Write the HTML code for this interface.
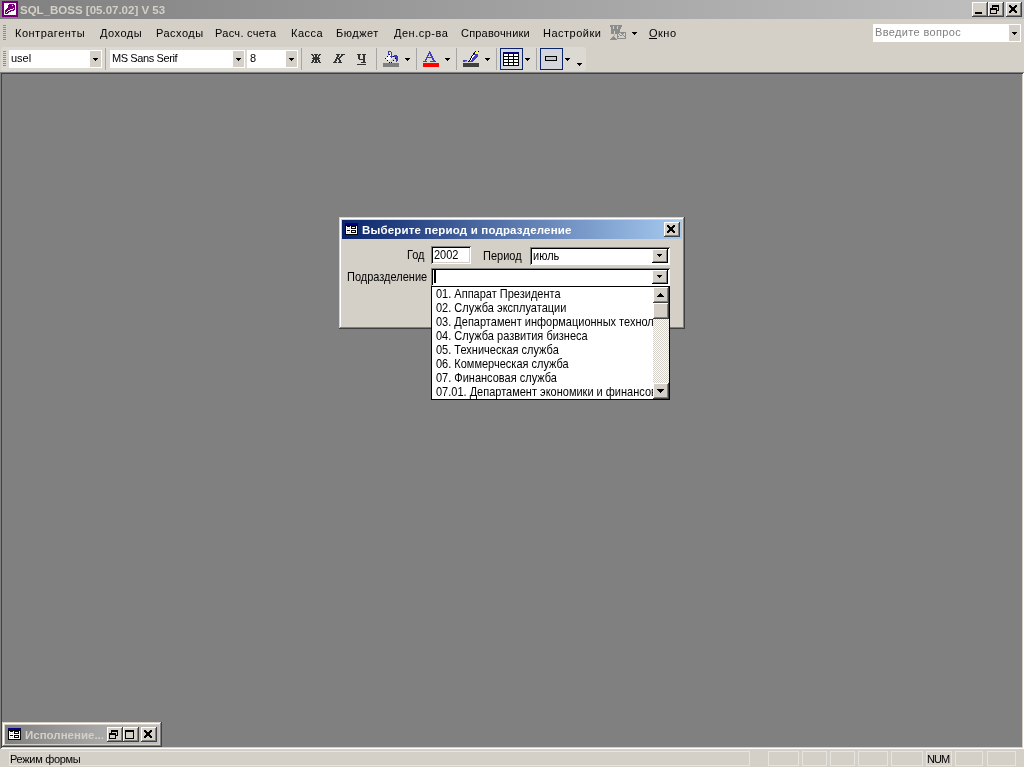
<!DOCTYPE html>
<html><head><meta charset="utf-8">
<style>
*{margin:0;padding:0;box-sizing:border-box}
html,body{width:1024px;height:768px;overflow:hidden;background:#d4d0c8;font-family:"Liberation Sans",sans-serif;font-size:11px;color:#000}
.a{position:absolute}
.t{position:absolute;white-space:nowrap;line-height:13px;font-size:11px;will-change:transform}
.m{letter-spacing:0.5px}
.d{font-size:11px;transform:scaleY(1.13);transform-origin:0 0}
.raised{background:#d4d0c8;box-shadow:inset -1px -1px #404040,inset 1px 1px #d4d0c8,inset -2px -2px #808080,inset 2px 2px #fff}
.craised{background:#d4d0c8;box-shadow:inset -1px -1px #404040,inset 1px 1px #fff,inset -2px -2px #808080}
.sunken{background:#fff;box-shadow:inset 1px 1px #808080,inset -1px -1px #fff,inset 2px 2px #000,inset -2px -2px #d4d0c8}
.csunk{background:#fff;box-shadow:inset 1px 1px #808080,inset -1px -1px #fff,inset 2px 2px #000,inset -2px -2px #fff}
.cbtn{background:#d4d0c8;box-shadow:inset -1px -1px #000,inset 1px 1px #fff,inset -2px -2px #808080}
.grip{position:absolute;width:3px;height:1px;background:#8c8c8c}
.sep{position:absolute;width:1px;background:#a6a6a6}
.pan{position:absolute;top:751px;height:15px;border:1px solid #e6e4df}
</style></head><body>

<div class="a" style="left:0px;top:0px;width:1024px;height:19px;background:linear-gradient(to right,#808080,#c0c0c0)"></div>
<svg class="a" style="left:2px;top:1px" width="16" height="16" shape-rendering="crispEdges"><rect width="16" height="16" fill="#fff"/><rect x="0" y="0" width="1" height="1" fill="#800000"/><rect x="1" y="0" width="1" height="1" fill="#800080"/><rect x="2" y="0" width="1" height="1" fill="#800000"/><rect x="3" y="0" width="1" height="1" fill="#800080"/><rect x="4" y="0" width="1" height="1" fill="#800000"/><rect x="5" y="0" width="1" height="1" fill="#800080"/><rect x="6" y="0" width="1" height="1" fill="#800000"/><rect x="7" y="0" width="1" height="1" fill="#800080"/><rect x="8" y="0" width="1" height="1" fill="#800000"/><rect x="9" y="0" width="1" height="1" fill="#800080"/><rect x="10" y="0" width="1" height="1" fill="#800000"/><rect x="11" y="0" width="1" height="1" fill="#800080"/><rect x="12" y="0" width="1" height="1" fill="#800000"/><rect x="13" y="0" width="1" height="1" fill="#800080"/><rect x="14" y="0" width="1" height="1" fill="#800000"/><rect x="15" y="0" width="1" height="1" fill="#800080"/><rect x="0" y="1" width="1" height="1" fill="#800080"/><rect x="1" y="1" width="1" height="1" fill="#800000"/><rect x="2" y="1" width="1" height="1" fill="#800080"/><rect x="3" y="1" width="1" height="1" fill="#800000"/><rect x="4" y="1" width="1" height="1" fill="#800080"/><rect x="5" y="1" width="1" height="1" fill="#800000"/><rect x="6" y="1" width="1" height="1" fill="#800080"/><rect x="7" y="1" width="1" height="1" fill="#800000"/><rect x="8" y="1" width="1" height="1" fill="#800080"/><rect x="9" y="1" width="1" height="1" fill="#800000"/><rect x="10" y="1" width="1" height="1" fill="#800080"/><rect x="11" y="1" width="1" height="1" fill="#800000"/><rect x="12" y="1" width="1" height="1" fill="#800080"/><rect x="13" y="1" width="1" height="1" fill="#800000"/><rect x="14" y="1" width="1" height="1" fill="#800080"/><rect x="15" y="1" width="1" height="1" fill="#800000"/><rect x="0" y="2" width="1" height="1" fill="#800000"/><rect x="1" y="2" width="1" height="1" fill="#800080"/><rect x="14" y="2" width="1" height="1" fill="#800000"/><rect x="15" y="2" width="1" height="1" fill="#800080"/><rect x="0" y="3" width="1" height="1" fill="#800080"/><rect x="1" y="3" width="1" height="1" fill="#800000"/><rect x="7" y="3" width="1" height="1" fill="#800000"/><rect x="8" y="3" width="1" height="1" fill="#800080"/><rect x="9" y="3" width="1" height="1" fill="#800000"/><rect x="10" y="3" width="1" height="1" fill="#800080"/><rect x="11" y="3" width="1" height="1" fill="#800000"/><rect x="14" y="3" width="1" height="1" fill="#800080"/><rect x="15" y="3" width="1" height="1" fill="#800000"/><rect x="0" y="4" width="1" height="1" fill="#800000"/><rect x="1" y="4" width="1" height="1" fill="#800080"/><rect x="6" y="4" width="1" height="1" fill="#800000"/><rect x="7" y="4" width="1" height="1" fill="#800080"/><rect x="8" y="4" width="1" height="1" fill="#800000"/><rect x="9" y="4" width="1" height="1" fill="#800080"/><rect x="10" y="4" width="1" height="1" fill="#fff"/><rect x="11" y="4" width="1" height="1" fill="#800080"/><rect x="12" y="4" width="1" height="1" fill="#800000"/><rect x="14" y="4" width="1" height="1" fill="#800000"/><rect x="15" y="4" width="1" height="1" fill="#800080"/><rect x="0" y="5" width="1" height="1" fill="#800080"/><rect x="1" y="5" width="1" height="1" fill="#800000"/><rect x="6" y="5" width="1" height="1" fill="#800080"/><rect x="7" y="5" width="1" height="1" fill="#800000"/><rect x="8" y="5" width="1" height="1" fill="#800080"/><rect x="9" y="5" width="1" height="1" fill="#800000"/><rect x="10" y="5" width="1" height="1" fill="#800080"/><rect x="11" y="5" width="1" height="1" fill="#800000"/><rect x="12" y="5" width="1" height="1" fill="#800080"/><rect x="14" y="5" width="1" height="1" fill="#800080"/><rect x="15" y="5" width="1" height="1" fill="#800000"/><rect x="0" y="6" width="1" height="1" fill="#800000"/><rect x="1" y="6" width="1" height="1" fill="#800080"/><rect x="6" y="6" width="1" height="1" fill="#800000"/><rect x="7" y="6" width="1" height="1" fill="#800080"/><rect x="8" y="6" width="1" height="1" fill="#800000"/><rect x="9" y="6" width="1" height="1" fill="#800080"/><rect x="10" y="6" width="1" height="1" fill="#800000"/><rect x="11" y="6" width="1" height="1" fill="#800080"/><rect x="12" y="6" width="1" height="1" fill="#800000"/><rect x="14" y="6" width="1" height="1" fill="#800000"/><rect x="15" y="6" width="1" height="1" fill="#800080"/><rect x="0" y="7" width="1" height="1" fill="#800080"/><rect x="1" y="7" width="1" height="1" fill="#800000"/><rect x="5" y="7" width="1" height="1" fill="#800000"/><rect x="6" y="7" width="1" height="1" fill="#800080"/><rect x="7" y="7" width="1" height="1" fill="#800000"/><rect x="8" y="7" width="1" height="1" fill="#800080"/><rect x="9" y="7" width="1" height="1" fill="#800000"/><rect x="10" y="7" width="1" height="1" fill="#800080"/><rect x="11" y="7" width="1" height="1" fill="#fff"/><rect x="12" y="7" width="1" height="1" fill="#800080"/><rect x="14" y="7" width="1" height="1" fill="#800080"/><rect x="15" y="7" width="1" height="1" fill="#800000"/><rect x="0" y="8" width="1" height="1" fill="#800000"/><rect x="1" y="8" width="1" height="1" fill="#800080"/><rect x="4" y="8" width="1" height="1" fill="#800000"/><rect x="5" y="8" width="1" height="1" fill="#800080"/><rect x="6" y="8" width="1" height="1" fill="#800000"/><rect x="7" y="8" width="1" height="1" fill="#800080"/><rect x="8" y="8" width="3" height="1" fill="#fff"/><rect x="11" y="8" width="1" height="1" fill="#800080"/><rect x="12" y="8" width="1" height="1" fill="#800000"/><rect x="14" y="8" width="1" height="1" fill="#800000"/><rect x="15" y="8" width="1" height="1" fill="#800080"/><rect x="0" y="9" width="1" height="1" fill="#800080"/><rect x="1" y="9" width="1" height="1" fill="#800000"/><rect x="3" y="9" width="1" height="1" fill="#800000"/><rect x="4" y="9" width="1" height="1" fill="#800080"/><rect x="5" y="9" width="1" height="1" fill="#800000"/><rect x="6" y="9" width="2" height="1" fill="#fff"/><rect x="8" y="9" width="1" height="1" fill="#800080"/><rect x="9" y="9" width="1" height="1" fill="#800000"/><rect x="10" y="9" width="1" height="1" fill="#800080"/><rect x="11" y="9" width="1" height="1" fill="#800000"/><rect x="14" y="9" width="1" height="1" fill="#800080"/><rect x="15" y="9" width="1" height="1" fill="#800000"/><rect x="0" y="10" width="1" height="1" fill="#800000"/><rect x="1" y="10" width="1" height="1" fill="#800080"/><rect x="3" y="10" width="1" height="1" fill="#800080"/><rect x="4" y="10" width="1" height="1" fill="#800000"/><rect x="5" y="10" width="1" height="1" fill="#fff"/><rect x="6" y="10" width="1" height="1" fill="#800000"/><rect x="7" y="10" width="1" height="1" fill="#800080"/><rect x="8" y="10" width="1" height="1" fill="#800000"/><rect x="14" y="10" width="1" height="1" fill="#800000"/><rect x="15" y="10" width="1" height="1" fill="#800080"/><rect x="0" y="11" width="1" height="1" fill="#800080"/><rect x="1" y="11" width="1" height="1" fill="#800000"/><rect x="3" y="11" width="1" height="1" fill="#800000"/><rect x="4" y="11" width="1" height="1" fill="#fff"/><rect x="5" y="11" width="1" height="1" fill="#800000"/><rect x="6" y="11" width="1" height="1" fill="#800080"/><rect x="14" y="11" width="1" height="1" fill="#800080"/><rect x="15" y="11" width="1" height="1" fill="#800000"/><rect x="0" y="12" width="1" height="1" fill="#800000"/><rect x="1" y="12" width="1" height="1" fill="#800080"/><rect x="3" y="12" width="1" height="1" fill="#800080"/><rect x="4" y="12" width="1" height="1" fill="#800000"/><rect x="5" y="12" width="1" height="1" fill="#800080"/><rect x="14" y="12" width="1" height="1" fill="#800000"/><rect x="15" y="12" width="1" height="1" fill="#800080"/><rect x="0" y="13" width="1" height="1" fill="#800080"/><rect x="1" y="13" width="1" height="1" fill="#800000"/><rect x="14" y="13" width="1" height="1" fill="#800080"/><rect x="15" y="13" width="1" height="1" fill="#800000"/><rect x="0" y="14" width="1" height="1" fill="#800000"/><rect x="1" y="14" width="1" height="1" fill="#800080"/><rect x="2" y="14" width="1" height="1" fill="#800000"/><rect x="3" y="14" width="1" height="1" fill="#800080"/><rect x="4" y="14" width="1" height="1" fill="#800000"/><rect x="5" y="14" width="1" height="1" fill="#800080"/><rect x="6" y="14" width="1" height="1" fill="#800000"/><rect x="7" y="14" width="1" height="1" fill="#800080"/><rect x="8" y="14" width="1" height="1" fill="#800000"/><rect x="9" y="14" width="1" height="1" fill="#800080"/><rect x="10" y="14" width="1" height="1" fill="#800000"/><rect x="11" y="14" width="1" height="1" fill="#800080"/><rect x="12" y="14" width="1" height="1" fill="#800000"/><rect x="13" y="14" width="1" height="1" fill="#800080"/><rect x="14" y="14" width="1" height="1" fill="#800000"/><rect x="15" y="14" width="1" height="1" fill="#800080"/><rect x="0" y="15" width="1" height="1" fill="#800080"/><rect x="1" y="15" width="1" height="1" fill="#800000"/><rect x="2" y="15" width="1" height="1" fill="#800080"/><rect x="3" y="15" width="1" height="1" fill="#800000"/><rect x="4" y="15" width="1" height="1" fill="#800080"/><rect x="5" y="15" width="1" height="1" fill="#800000"/><rect x="6" y="15" width="1" height="1" fill="#800080"/><rect x="7" y="15" width="1" height="1" fill="#800000"/><rect x="8" y="15" width="1" height="1" fill="#800080"/><rect x="9" y="15" width="1" height="1" fill="#800000"/><rect x="10" y="15" width="1" height="1" fill="#800080"/><rect x="11" y="15" width="1" height="1" fill="#800000"/><rect x="12" y="15" width="1" height="1" fill="#800080"/><rect x="13" y="15" width="1" height="1" fill="#800000"/><rect x="14" y="15" width="1" height="1" fill="#800080"/><rect x="15" y="15" width="1" height="1" fill="#800000"/></svg>
<div class="t" style="left:20px;top:4px;font-weight:bold;font-size:11.5px;color:#d4d0c8">SQL_BOSS [05.07.02] V 53</div>
<div class="a craised" style="left:972px;top:2px;width:16px;height:15px"></div><div class="a" style="left:975px;top:12px;width:7px;height:2px;background:#000"></div>
<div class="a craised" style="left:988px;top:2px;width:16px;height:15px"></div><svg class="a" style="left:990px;top:5px" width="9" height="9" shape-rendering="crispEdges"><rect x="2" y="0" width="7" height="1" fill="#000"/><rect x="2" y="1" width="7" height="1" fill="#000"/><rect x="2" y="2" width="1" height="1" fill="#000"/><rect x="8" y="2" width="1" height="1" fill="#000"/><rect x="0" y="3" width="7" height="1" fill="#000"/><rect x="8" y="3" width="1" height="1" fill="#000"/><rect x="0" y="4" width="7" height="1" fill="#000"/><rect x="8" y="4" width="1" height="1" fill="#000"/><rect x="0" y="5" width="1" height="1" fill="#000"/><rect x="6" y="5" width="3" height="1" fill="#000"/><rect x="0" y="6" width="1" height="1" fill="#000"/><rect x="6" y="6" width="1" height="1" fill="#000"/><rect x="0" y="7" width="1" height="1" fill="#000"/><rect x="6" y="7" width="1" height="1" fill="#000"/><rect x="0" y="8" width="7" height="1" fill="#000"/></svg>
<div class="a craised" style="left:1006px;top:2px;width:16px;height:15px"></div><svg class="a" style="left:1009px;top:5px" width="8" height="8" shape-rendering="crispEdges"><rect x="0" y="0" width="2" height="1" fill="#000"/><rect x="6" y="0" width="2" height="1" fill="#000"/><rect x="0" y="1" width="3" height="1" fill="#000"/><rect x="5" y="1" width="3" height="1" fill="#000"/><rect x="1" y="2" width="6" height="1" fill="#000"/><rect x="2" y="3" width="4" height="1" fill="#000"/><rect x="2" y="4" width="4" height="1" fill="#000"/><rect x="1" y="5" width="6" height="1" fill="#000"/><rect x="0" y="6" width="3" height="1" fill="#000"/><rect x="5" y="6" width="3" height="1" fill="#000"/><rect x="0" y="7" width="2" height="1" fill="#000"/><rect x="6" y="7" width="2" height="1" fill="#000"/></svg>
<div class="grip" style="left:3px;top:25px"></div>
<div class="grip" style="left:3px;top:27px"></div>
<div class="grip" style="left:3px;top:29px"></div>
<div class="grip" style="left:3px;top:31px"></div>
<div class="grip" style="left:3px;top:33px"></div>
<div class="grip" style="left:3px;top:35px"></div>
<div class="grip" style="left:3px;top:37px"></div>
<div class="grip" style="left:3px;top:39px"></div>
<div class="t m" style="left:15px;top:27px;letter-spacing:0.5px">Контрагенты</div>
<div class="t m" style="left:100px;top:27px;letter-spacing:0.5px">Доходы</div>
<div class="t m" style="left:156px;top:27px;letter-spacing:0.5px">Расходы</div>
<div class="t m" style="left:215px;top:27px;letter-spacing:0.3px">Расч. счета</div>
<div class="t m" style="left:291px;top:27px;letter-spacing:0.5px">Касса</div>
<div class="t m" style="left:336px;top:27px;letter-spacing:0.5px">Бюджет</div>
<div class="t m" style="left:394px;top:27px;letter-spacing:0.5px">Ден.ср-ва</div>
<div class="t m" style="left:461px;top:27px;letter-spacing:0.2px">Справочники</div>
<div class="t m" style="left:543px;top:27px;letter-spacing:0.5px">Настройки</div>
<svg class="a" style="left:610px;top:25px" width="16" height="15" shape-rendering="crispEdges"><rect x="0" y="0" width="12" height="1" fill="#8c8c8c"/><rect x="0" y="1" width="3" height="1" fill="#8c8c8c"/><rect x="3" y="1" width="1" height="1" fill="#d4d0c8"/><rect x="4" y="1" width="3" height="1" fill="#8c8c8c"/><rect x="7" y="1" width="1" height="1" fill="#d4d0c8"/><rect x="8" y="1" width="4" height="1" fill="#8c8c8c"/><rect x="1" y="2" width="2" height="1" fill="#8c8c8c"/><rect x="3" y="2" width="1" height="1" fill="#d4d0c8"/><rect x="4" y="2" width="3" height="1" fill="#8c8c8c"/><rect x="7" y="2" width="1" height="1" fill="#d4d0c8"/><rect x="8" y="2" width="3" height="1" fill="#8c8c8c"/><rect x="1" y="3" width="2" height="1" fill="#8c8c8c"/><rect x="3" y="3" width="1" height="1" fill="#d4d0c8"/><rect x="4" y="3" width="3" height="1" fill="#8c8c8c"/><rect x="7" y="3" width="1" height="1" fill="#d4d0c8"/><rect x="8" y="3" width="3" height="1" fill="#8c8c8c"/><rect x="1" y="4" width="9" height="1" fill="#8c8c8c"/><rect x="1" y="5" width="9" height="1" fill="#8c8c8c"/><rect x="1" y="6" width="3" height="1" fill="#8c8c8c"/><rect x="4" y="6" width="1" height="1" fill="#d4d0c8"/><rect x="5" y="6" width="5" height="1" fill="#8c8c8c"/><rect x="1" y="7" width="3" height="1" fill="#8c8c8c"/><rect x="4" y="7" width="1" height="1" fill="#d4d0c8"/><rect x="5" y="7" width="11" height="1" fill="#8c8c8c"/><rect x="1" y="8" width="3" height="1" fill="#8c8c8c"/><rect x="4" y="8" width="1" height="1" fill="#d4d0c8"/><rect x="5" y="8" width="4" height="1" fill="#8c8c8c"/><rect x="9" y="8" width="2" height="1" fill="#d4d0c8"/><rect x="11" y="8" width="3" height="1" fill="#8c8c8c"/><rect x="14" y="8" width="1" height="1" fill="#d4d0c8"/><rect x="15" y="8" width="1" height="1" fill="#8c8c8c"/><rect x="4" y="9" width="1" height="1" fill="#b4b2ae"/><rect x="7" y="9" width="1" height="1" fill="#8c8c8c"/><rect x="8" y="9" width="1" height="1" fill="#d4d0c8"/><rect x="9" y="9" width="1" height="1" fill="#8c8c8c"/><rect x="10" y="9" width="2" height="1" fill="#d4d0c8"/><rect x="12" y="9" width="1" height="1" fill="#8c8c8c"/><rect x="13" y="9" width="2" height="1" fill="#d4d0c8"/><rect x="15" y="9" width="1" height="1" fill="#8c8c8c"/><rect x="4" y="10" width="1" height="1" fill="#b4b2ae"/><rect x="7" y="10" width="1" height="1" fill="#8c8c8c"/><rect x="8" y="10" width="2" height="1" fill="#d4d0c8"/><rect x="10" y="10" width="2" height="1" fill="#8c8c8c"/><rect x="12" y="10" width="1" height="1" fill="#d4d0c8"/><rect x="13" y="10" width="1" height="1" fill="#8c8c8c"/><rect x="14" y="10" width="1" height="1" fill="#d4d0c8"/><rect x="15" y="10" width="1" height="1" fill="#8c8c8c"/><rect x="3" y="11" width="1" height="1" fill="#8c8c8c"/><rect x="7" y="11" width="2" height="1" fill="#8c8c8c"/><rect x="9" y="11" width="5" height="1" fill="#d4d0c8"/><rect x="14" y="11" width="2" height="1" fill="#8c8c8c"/><rect x="2" y="12" width="3" height="1" fill="#8c8c8c"/><rect x="7" y="12" width="1" height="1" fill="#8c8c8c"/><rect x="8" y="12" width="7" height="1" fill="#d4d0c8"/><rect x="15" y="12" width="1" height="1" fill="#8c8c8c"/><rect x="1" y="13" width="5" height="1" fill="#8c8c8c"/><rect x="7" y="13" width="9" height="1" fill="#8c8c8c"/><rect x="0" y="14" width="7" height="1" fill="#8c8c8c"/></svg>
<svg class="a" style="left:632px;top:32px" width="5" height="3" shape-rendering="crispEdges"><rect x="0" y="0" width="5" height="1" fill="#000"/><rect x="1" y="1" width="3" height="1" fill="#000"/><rect x="2" y="2" width="1" height="1" fill="#000"/></svg>
<div class="t m" style="left:649px;top:27px">Окно</div>
<div class="a" style="left:649px;top:38px;width:8px;height:1px;background:#000"></div>
<div class="a" style="left:873px;top:24px;width:148px;height:18px;background:#fff"></div>
<div class="a" style="left:1009px;top:25px;width:11px;height:16px;background:#d4d0c8"></div>
<svg class="a" style="left:1012px;top:32px" width="5" height="3" shape-rendering="crispEdges"><rect x="0" y="0" width="5" height="1" fill="#000"/><rect x="1" y="1" width="3" height="1" fill="#000"/><rect x="2" y="2" width="1" height="1" fill="#000"/></svg>
<div class="t" style="left:875px;top:26px;color:#808080;letter-spacing:0.35px">Введите вопрос</div>
<div class="a" style="left:1px;top:47px;width:585px;height:24px;background:#dcd9d2;border-radius:3px"></div>
<div class="grip" style="left:3px;top:51px"></div>
<div class="grip" style="left:3px;top:53px"></div>
<div class="grip" style="left:3px;top:55px"></div>
<div class="grip" style="left:3px;top:57px"></div>
<div class="grip" style="left:3px;top:59px"></div>
<div class="grip" style="left:3px;top:61px"></div>
<div class="grip" style="left:3px;top:63px"></div>
<div class="grip" style="left:3px;top:65px"></div>
<div class="a" style="left:9px;top:50px;width:93px;height:18px;background:#fff"></div><div class="a" style="left:90px;top:51px;width:11px;height:16px;background:#d4d0c8"></div><svg class="a" style="left:93px;top:58px" width="5" height="3" shape-rendering="crispEdges"><rect x="0" y="0" width="5" height="1" fill="#000"/><rect x="1" y="1" width="3" height="1" fill="#000"/><rect x="2" y="2" width="1" height="1" fill="#000"/></svg><div class="t" style="left:11px;top:52px;font-size:11px">usel</div>
<div class="sep" style="left:105px;top:48px;height:22px"></div>
<div class="a" style="left:110px;top:50px;width:135px;height:18px;background:#fff"></div><div class="a" style="left:233px;top:51px;width:11px;height:16px;background:#d4d0c8"></div><svg class="a" style="left:236px;top:58px" width="5" height="3" shape-rendering="crispEdges"><rect x="0" y="0" width="5" height="1" fill="#000"/><rect x="1" y="1" width="3" height="1" fill="#000"/><rect x="2" y="2" width="1" height="1" fill="#000"/></svg><div class="t" style="left:112px;top:52px;font-size:11px;letter-spacing:-0.4px">MS Sans Serif</div>
<div class="a" style="left:247px;top:50px;width:51px;height:18px;background:#fff"></div><div class="a" style="left:286px;top:51px;width:11px;height:16px;background:#d4d0c8"></div><svg class="a" style="left:289px;top:58px" width="5" height="3" shape-rendering="crispEdges"><rect x="0" y="0" width="5" height="1" fill="#000"/><rect x="1" y="1" width="3" height="1" fill="#000"/><rect x="2" y="2" width="1" height="1" fill="#000"/></svg><div class="t" style="left:250px;top:52px;font-size:11px">8</div>
<div class="sep" style="left:301px;top:48px;height:22px"></div>
<svg class="a" style="left:311px;top:54px" width="10" height="9" shape-rendering="crispEdges"><rect x="0" y="0" width="2" height="1" fill="#333"/><rect x="3" y="0" width="4" height="1" fill="#333"/><rect x="8" y="0" width="2" height="1" fill="#333"/><rect x="1" y="1" width="2" height="1" fill="#333"/><rect x="4" y="1" width="2" height="1" fill="#333"/><rect x="7" y="1" width="2" height="1" fill="#333"/><rect x="2" y="2" width="1" height="1" fill="#333"/><rect x="4" y="2" width="2" height="1" fill="#333"/><rect x="7" y="2" width="1" height="1" fill="#333"/><rect x="2" y="3" width="6" height="1" fill="#333"/><rect x="1" y="4" width="8" height="1" fill="#333"/><rect x="2" y="5" width="6" height="1" fill="#333"/><rect x="1" y="6" width="2" height="1" fill="#333"/><rect x="4" y="6" width="2" height="1" fill="#333"/><rect x="7" y="6" width="2" height="1" fill="#333"/><rect x="1" y="7" width="2" height="1" fill="#333"/><rect x="4" y="7" width="2" height="1" fill="#333"/><rect x="7" y="7" width="2" height="1" fill="#333"/><rect x="0" y="8" width="2" height="1" fill="#333"/><rect x="3" y="8" width="4" height="1" fill="#333"/><rect x="8" y="8" width="2" height="1" fill="#333"/></svg>
<svg class="a" style="left:333px;top:54px" width="12" height="9" shape-rendering="crispEdges"><rect x="3" y="0" width="4" height="1" fill="#333"/><rect x="8" y="0" width="4" height="1" fill="#333"/><rect x="4" y="1" width="2" height="1" fill="#333"/><rect x="8" y="1" width="2" height="1" fill="#333"/><rect x="4" y="2" width="2" height="1" fill="#333"/><rect x="7" y="2" width="2" height="1" fill="#333"/><rect x="3" y="3" width="2" height="1" fill="#333"/><rect x="6" y="3" width="2" height="1" fill="#333"/><rect x="3" y="4" width="4" height="1" fill="#333"/><rect x="2" y="5" width="2" height="1" fill="#333"/><rect x="5" y="5" width="2" height="1" fill="#333"/><rect x="2" y="6" width="2" height="1" fill="#333"/><rect x="6" y="6" width="2" height="1" fill="#333"/><rect x="1" y="7" width="2" height="1" fill="#333"/><rect x="6" y="7" width="2" height="1" fill="#333"/><rect x="0" y="8" width="4" height="1" fill="#333"/><rect x="5" y="8" width="4" height="1" fill="#333"/></svg>
<svg class="a" style="left:357px;top:54px" width="9" height="11" shape-rendering="crispEdges"><rect x="0" y="0" width="4" height="1" fill="#333"/><rect x="5" y="0" width="4" height="1" fill="#333"/><rect x="1" y="1" width="2" height="1" fill="#333"/><rect x="6" y="1" width="2" height="1" fill="#333"/><rect x="1" y="2" width="2" height="1" fill="#333"/><rect x="6" y="2" width="2" height="1" fill="#333"/><rect x="1" y="3" width="2" height="1" fill="#333"/><rect x="6" y="3" width="2" height="1" fill="#333"/><rect x="1" y="4" width="2" height="1" fill="#333"/><rect x="6" y="4" width="2" height="1" fill="#333"/><rect x="2" y="5" width="6" height="1" fill="#333"/><rect x="6" y="6" width="2" height="1" fill="#333"/><rect x="6" y="7" width="2" height="1" fill="#333"/><rect x="4" y="8" width="5" height="1" fill="#333"/><rect x="0" y="10" width="9" height="1" fill="#333"/></svg>
<div class="sep" style="left:376px;top:48px;height:22px"></div>
<svg class="a" style="left:383px;top:50px" width="16" height="13" shape-rendering="crispEdges"><rect x="5" y="1" width="3" height="1" fill="#3c3cb4"/><rect x="5" y="2" width="1" height="1" fill="#3c3cb4"/><rect x="8" y="2" width="1" height="1" fill="#3c3cb4"/><rect x="5" y="3" width="1" height="1" fill="#3c3cb4"/><rect x="7" y="3" width="1" height="1" fill="#d8d8d8"/><rect x="8" y="3" width="1" height="1" fill="#3c3cb4"/><rect x="5" y="4" width="1" height="1" fill="#3c3cb4"/><rect x="6" y="4" width="1" height="1" fill="#000"/><rect x="7" y="4" width="1" height="1" fill="#fff"/><rect x="8" y="4" width="1" height="1" fill="#3c3cb4"/><rect x="5" y="5" width="1" height="1" fill="#d8d8d8"/><rect x="6" y="5" width="2" height="1" fill="#fff"/><rect x="8" y="5" width="1" height="1" fill="#3c3cb4"/><rect x="9" y="5" width="1" height="1" fill="#d8d8d8"/><rect x="11" y="5" width="3" height="1" fill="#3c3cb4"/><rect x="4" y="6" width="1" height="1" fill="#000"/><rect x="5" y="6" width="2" height="1" fill="#fff"/><rect x="7" y="6" width="3" height="1" fill="#3c3cb4"/><rect x="10" y="6" width="1" height="1" fill="#000"/><rect x="11" y="6" width="4" height="1" fill="#3c3cb4"/><rect x="3" y="7" width="1" height="1" fill="#d8d8d8"/><rect x="4" y="7" width="4" height="1" fill="#fff"/><rect x="8" y="7" width="1" height="1" fill="#3c3cb4"/><rect x="9" y="7" width="2" height="1" fill="#e4e4e4"/><rect x="11" y="7" width="1" height="1" fill="#d8d8d8"/><rect x="12" y="7" width="3" height="1" fill="#3c3cb4"/><rect x="2" y="8" width="1" height="1" fill="#000"/><rect x="3" y="8" width="4" height="1" fill="#fff"/><rect x="7" y="8" width="3" height="1" fill="#e4e4e4"/><rect x="10" y="8" width="2" height="1" fill="#c8c8c8"/><rect x="12" y="8" width="1" height="1" fill="#000"/><rect x="13" y="8" width="2" height="1" fill="#3c3cb4"/><rect x="3" y="9" width="1" height="1" fill="#d8d8d8"/><rect x="4" y="9" width="2" height="1" fill="#fff"/><rect x="6" y="9" width="3" height="1" fill="#e4e4e4"/><rect x="9" y="9" width="2" height="1" fill="#c8c8c8"/><rect x="11" y="9" width="1" height="1" fill="#d8d8d8"/><rect x="13" y="9" width="2" height="1" fill="#3c3cb4"/><rect x="4" y="10" width="1" height="1" fill="#000"/><rect x="5" y="10" width="3" height="1" fill="#e4e4e4"/><rect x="8" y="10" width="2" height="1" fill="#c8c8c8"/><rect x="10" y="10" width="1" height="1" fill="#000"/><rect x="13" y="10" width="2" height="1" fill="#3c3cb4"/><rect x="5" y="11" width="1" height="1" fill="#d8d8d8"/><rect x="6" y="11" width="1" height="1" fill="#e4e4e4"/><rect x="7" y="11" width="2" height="1" fill="#c8c8c8"/><rect x="9" y="11" width="1" height="1" fill="#d8d8d8"/><rect x="13" y="11" width="1" height="1" fill="#3c3cb4"/><rect x="6" y="12" width="1" height="1" fill="#000"/><rect x="7" y="12" width="1" height="1" fill="#c8c8c8"/><rect x="8" y="12" width="1" height="1" fill="#000"/></svg>
<div class="a" style="left:383px;top:63px;width:16px;height:4px;background:#808080"></div>
<svg class="a" style="left:405px;top:58px" width="5" height="3" shape-rendering="crispEdges"><rect x="0" y="0" width="5" height="1" fill="#000"/><rect x="1" y="1" width="3" height="1" fill="#000"/><rect x="2" y="2" width="1" height="1" fill="#000"/></svg>
<div class="sep" style="left:416px;top:48px;height:22px"></div>
<svg class="a" style="left:423px;top:51px" width="16" height="11" shape-rendering="crispEdges"><rect x="6" y="0" width="1" height="1" fill="#4040c0"/><rect x="6" y="1" width="2" height="1" fill="#4040c0"/><rect x="5" y="2" width="3" height="1" fill="#4040c0"/><rect x="5" y="3" width="1" height="1" fill="#4040c0"/><rect x="7" y="3" width="2" height="1" fill="#4040c0"/><rect x="4" y="4" width="2" height="1" fill="#4040c0"/><rect x="7" y="4" width="2" height="1" fill="#4040c0"/><rect x="4" y="5" width="1" height="1" fill="#4040c0"/><rect x="8" y="5" width="2" height="1" fill="#4040c0"/><rect x="3" y="6" width="7" height="1" fill="#4040c0"/><rect x="3" y="7" width="1" height="1" fill="#4040c0"/><rect x="9" y="7" width="2" height="1" fill="#4040c0"/><rect x="2" y="8" width="2" height="1" fill="#4040c0"/><rect x="9" y="8" width="2" height="1" fill="#4040c0"/><rect x="2" y="9" width="1" height="1" fill="#4040c0"/><rect x="10" y="9" width="2" height="1" fill="#4040c0"/><rect x="0" y="10" width="4" height="1" fill="#4040c0"/><rect x="7" y="10" width="6" height="1" fill="#4040c0"/></svg>
<div class="a" style="left:423px;top:63px;width:16px;height:4px;background:#f00"></div>
<svg class="a" style="left:445px;top:58px" width="5" height="3" shape-rendering="crispEdges"><rect x="0" y="0" width="5" height="1" fill="#000"/><rect x="1" y="1" width="3" height="1" fill="#000"/><rect x="2" y="2" width="1" height="1" fill="#000"/></svg>
<div class="sep" style="left:456px;top:48px;height:22px"></div>
<svg class="a" style="left:463px;top:50px" width="16" height="13" shape-rendering="crispEdges"><rect x="12" y="1" width="1" height="1" fill="#000"/><rect x="13" y="1" width="2" height="1" fill="#ffff00"/><rect x="15" y="1" width="1" height="1" fill="#000"/><rect x="11" y="2" width="1" height="1" fill="#000"/><rect x="12" y="2" width="3" height="1" fill="#ffff00"/><rect x="10" y="3" width="2" height="1" fill="#000"/><rect x="12" y="3" width="3" height="1" fill="#ffff00"/><rect x="10" y="4" width="1" height="1" fill="#000"/><rect x="11" y="4" width="4" height="1" fill="#4040c0"/><rect x="9" y="5" width="1" height="1" fill="#000"/><rect x="10" y="5" width="2" height="1" fill="#fff"/><rect x="12" y="5" width="3" height="1" fill="#4040c0"/><rect x="8" y="6" width="1" height="1" fill="#000"/><rect x="9" y="6" width="2" height="1" fill="#fff"/><rect x="11" y="6" width="4" height="1" fill="#4040c0"/><rect x="8" y="7" width="1" height="1" fill="#000"/><rect x="9" y="7" width="1" height="1" fill="#fff"/><rect x="10" y="7" width="4" height="1" fill="#4040c0"/><rect x="7" y="8" width="1" height="1" fill="#000"/><rect x="8" y="8" width="1" height="1" fill="#fff"/><rect x="9" y="8" width="4" height="1" fill="#4040c0"/><rect x="7" y="9" width="1" height="1" fill="#000"/><rect x="8" y="9" width="1" height="1" fill="#fff"/><rect x="9" y="9" width="3" height="1" fill="#4040c0"/><rect x="0" y="10" width="4" height="1" fill="#4040c0"/><rect x="6" y="10" width="1" height="1" fill="#000"/><rect x="7" y="10" width="1" height="1" fill="#fff"/><rect x="8" y="10" width="3" height="1" fill="#4040c0"/><rect x="0" y="11" width="2" height="1" fill="#4040c0"/><rect x="2" y="11" width="2" height="1" fill="#40c0c0"/><rect x="5" y="11" width="1" height="1" fill="#000"/><rect x="6" y="11" width="4" height="1" fill="#4040c0"/></svg>
<div class="a" style="left:463px;top:63px;width:16px;height:4px;background:#404040"></div>
<svg class="a" style="left:485px;top:58px" width="5" height="3" shape-rendering="crispEdges"><rect x="0" y="0" width="5" height="1" fill="#000"/><rect x="1" y="1" width="3" height="1" fill="#000"/><rect x="2" y="2" width="1" height="1" fill="#000"/></svg>
<div class="sep" style="left:496px;top:48px;height:22px"></div>
<div class="a" style="left:500px;top:48px;width:23px;height:22px;background:#d5d6db;border:1px solid #0a246a"></div>
<svg class="a" style="left:503px;top:52px" width="16" height="14" shape-rendering="crispEdges"><rect x="0" y="0" width="16" height="1" fill="#000080"/><rect x="0" y="1" width="16" height="1" fill="#000080"/><rect x="0" y="2" width="1" height="1" fill="#000"/><rect x="1" y="2" width="4" height="1" fill="#fff"/><rect x="5" y="2" width="1" height="1" fill="#000"/><rect x="6" y="2" width="4" height="1" fill="#fff"/><rect x="10" y="2" width="1" height="1" fill="#000"/><rect x="11" y="2" width="4" height="1" fill="#fff"/><rect x="15" y="2" width="1" height="1" fill="#000"/><rect x="0" y="3" width="1" height="1" fill="#000"/><rect x="1" y="3" width="4" height="1" fill="#fff"/><rect x="5" y="3" width="1" height="1" fill="#000"/><rect x="6" y="3" width="4" height="1" fill="#fff"/><rect x="10" y="3" width="1" height="1" fill="#000"/><rect x="11" y="3" width="4" height="1" fill="#fff"/><rect x="15" y="3" width="1" height="1" fill="#000"/><rect x="0" y="4" width="16" height="1" fill="#000"/><rect x="0" y="5" width="1" height="1" fill="#000"/><rect x="1" y="5" width="4" height="1" fill="#fff"/><rect x="5" y="5" width="1" height="1" fill="#000"/><rect x="6" y="5" width="4" height="1" fill="#fff"/><rect x="10" y="5" width="1" height="1" fill="#000"/><rect x="11" y="5" width="4" height="1" fill="#fff"/><rect x="15" y="5" width="1" height="1" fill="#000"/><rect x="0" y="6" width="1" height="1" fill="#000"/><rect x="1" y="6" width="4" height="1" fill="#fff"/><rect x="5" y="6" width="1" height="1" fill="#000"/><rect x="6" y="6" width="4" height="1" fill="#fff"/><rect x="10" y="6" width="1" height="1" fill="#000"/><rect x="11" y="6" width="4" height="1" fill="#fff"/><rect x="15" y="6" width="1" height="1" fill="#000"/><rect x="0" y="7" width="16" height="1" fill="#000"/><rect x="0" y="8" width="1" height="1" fill="#000"/><rect x="1" y="8" width="4" height="1" fill="#fff"/><rect x="5" y="8" width="1" height="1" fill="#000"/><rect x="6" y="8" width="4" height="1" fill="#fff"/><rect x="10" y="8" width="1" height="1" fill="#000"/><rect x="11" y="8" width="4" height="1" fill="#fff"/><rect x="15" y="8" width="1" height="1" fill="#000"/><rect x="0" y="9" width="1" height="1" fill="#000"/><rect x="1" y="9" width="4" height="1" fill="#fff"/><rect x="5" y="9" width="1" height="1" fill="#000"/><rect x="6" y="9" width="4" height="1" fill="#fff"/><rect x="10" y="9" width="1" height="1" fill="#000"/><rect x="11" y="9" width="4" height="1" fill="#fff"/><rect x="15" y="9" width="1" height="1" fill="#000"/><rect x="0" y="10" width="16" height="1" fill="#000"/><rect x="0" y="11" width="1" height="1" fill="#000"/><rect x="1" y="11" width="4" height="1" fill="#fff"/><rect x="5" y="11" width="1" height="1" fill="#000"/><rect x="6" y="11" width="4" height="1" fill="#fff"/><rect x="10" y="11" width="1" height="1" fill="#000"/><rect x="11" y="11" width="4" height="1" fill="#fff"/><rect x="15" y="11" width="1" height="1" fill="#000"/><rect x="0" y="12" width="1" height="1" fill="#000"/><rect x="1" y="12" width="4" height="1" fill="#fff"/><rect x="5" y="12" width="1" height="1" fill="#000"/><rect x="6" y="12" width="4" height="1" fill="#fff"/><rect x="10" y="12" width="1" height="1" fill="#000"/><rect x="11" y="12" width="4" height="1" fill="#fff"/><rect x="15" y="12" width="1" height="1" fill="#000"/><rect x="0" y="13" width="16" height="1" fill="#000"/></svg>
<svg class="a" style="left:525px;top:58px" width="5" height="3" shape-rendering="crispEdges"><rect x="0" y="0" width="5" height="1" fill="#000"/><rect x="1" y="1" width="3" height="1" fill="#000"/><rect x="2" y="2" width="1" height="1" fill="#000"/></svg>
<div class="sep" style="left:536px;top:48px;height:22px"></div>
<div class="a" style="left:540px;top:48px;width:23px;height:22px;background:#d5d6db;border:1px solid #0a246a"></div>
<div class="a" style="left:545px;top:56px;width:12px;height:5px;background:#c8c8c8;border:1px solid #000"></div>
<svg class="a" style="left:565px;top:58px" width="5" height="3" shape-rendering="crispEdges"><rect x="0" y="0" width="5" height="1" fill="#000"/><rect x="1" y="1" width="3" height="1" fill="#000"/><rect x="2" y="2" width="1" height="1" fill="#000"/></svg>
<svg class="a" style="left:577px;top:63px" width="5" height="3" shape-rendering="crispEdges"><rect x="0" y="0" width="5" height="1" fill="#000"/><rect x="1" y="1" width="3" height="1" fill="#000"/><rect x="2" y="2" width="1" height="1" fill="#000"/></svg>
<div class="a" style="left:0px;top:72px;width:1024px;height:677px;background:#808080;box-shadow:inset 1px 1px #808080,inset -1px -1px #fff,inset 2px 2px #404040,inset -2px -2px #d4d0c8"></div>
<div class="a raised" style="left:2px;top:722px;width:160px;height:25px;"></div>
<div class="a" style="left:5px;top:725px;width:154px;height:19px;background:linear-gradient(to right,#808080,#c0c0c0)"></div>
<svg class="a" style="left:8px;top:728px" width="13" height="12" shape-rendering="crispEdges"><rect x="0" y="0" width="13" height="1" fill="#000080"/><rect x="0" y="1" width="13" height="1" fill="#000080"/><rect x="0" y="2" width="13" height="1" fill="#000"/><rect x="0" y="3" width="1" height="1" fill="#000"/><rect x="1" y="3" width="1" height="1" fill="#fff"/><rect x="2" y="3" width="3" height="1" fill="#000"/><rect x="5" y="3" width="1" height="1" fill="#fff"/><rect x="6" y="3" width="5" height="1" fill="#000"/><rect x="11" y="3" width="1" height="1" fill="#fff"/><rect x="12" y="3" width="1" height="1" fill="#000"/><rect x="0" y="4" width="1" height="1" fill="#000"/><rect x="1" y="4" width="5" height="1" fill="#fff"/><rect x="6" y="4" width="1" height="1" fill="#000"/><rect x="7" y="4" width="3" height="1" fill="#fff"/><rect x="10" y="4" width="1" height="1" fill="#000"/><rect x="11" y="4" width="1" height="1" fill="#fff"/><rect x="12" y="4" width="1" height="1" fill="#000"/><rect x="0" y="5" width="1" height="1" fill="#000"/><rect x="1" y="5" width="1" height="1" fill="#fff"/><rect x="2" y="5" width="1" height="1" fill="#c0c0c0"/><rect x="3" y="5" width="1" height="1" fill="#fff"/><rect x="4" y="5" width="1" height="1" fill="#c0c0c0"/><rect x="5" y="5" width="1" height="1" fill="#fff"/><rect x="6" y="5" width="5" height="1" fill="#000"/><rect x="11" y="5" width="1" height="1" fill="#fff"/><rect x="12" y="5" width="1" height="1" fill="#000"/><rect x="0" y="6" width="1" height="1" fill="#000"/><rect x="1" y="6" width="11" height="1" fill="#fff"/><rect x="12" y="6" width="1" height="1" fill="#000"/><rect x="0" y="7" width="1" height="1" fill="#000"/><rect x="1" y="7" width="1" height="1" fill="#fff"/><rect x="2" y="7" width="3" height="1" fill="#000"/><rect x="5" y="7" width="1" height="1" fill="#fff"/><rect x="6" y="7" width="5" height="1" fill="#000"/><rect x="11" y="7" width="1" height="1" fill="#fff"/><rect x="12" y="7" width="1" height="1" fill="#000"/><rect x="0" y="8" width="1" height="1" fill="#000"/><rect x="1" y="8" width="5" height="1" fill="#fff"/><rect x="6" y="8" width="1" height="1" fill="#000"/><rect x="7" y="8" width="3" height="1" fill="#fff"/><rect x="10" y="8" width="1" height="1" fill="#000"/><rect x="11" y="8" width="1" height="1" fill="#fff"/><rect x="12" y="8" width="1" height="1" fill="#000"/><rect x="0" y="9" width="1" height="1" fill="#000"/><rect x="1" y="9" width="1" height="1" fill="#fff"/><rect x="2" y="9" width="1" height="1" fill="#c0c0c0"/><rect x="3" y="9" width="1" height="1" fill="#fff"/><rect x="4" y="9" width="1" height="1" fill="#c0c0c0"/><rect x="5" y="9" width="1" height="1" fill="#fff"/><rect x="6" y="9" width="5" height="1" fill="#000"/><rect x="11" y="9" width="1" height="1" fill="#fff"/><rect x="12" y="9" width="1" height="1" fill="#000"/><rect x="0" y="10" width="1" height="1" fill="#000"/><rect x="1" y="10" width="11" height="1" fill="#fff"/><rect x="12" y="10" width="1" height="1" fill="#000"/><rect x="0" y="11" width="13" height="1" fill="#000"/></svg>
<div class="t" style="left:25px;top:729px;font-weight:bold;font-size:11.5px;color:#d4d0c8">Исполнение...</div>
<div class="a craised" style="left:107px;top:727px;width:16px;height:15px"></div><svg class="a" style="left:109px;top:730px" width="9" height="9" shape-rendering="crispEdges"><rect x="2" y="0" width="7" height="1" fill="#000"/><rect x="2" y="1" width="7" height="1" fill="#000"/><rect x="2" y="2" width="1" height="1" fill="#000"/><rect x="8" y="2" width="1" height="1" fill="#000"/><rect x="0" y="3" width="7" height="1" fill="#000"/><rect x="8" y="3" width="1" height="1" fill="#000"/><rect x="0" y="4" width="7" height="1" fill="#000"/><rect x="8" y="4" width="1" height="1" fill="#000"/><rect x="0" y="5" width="1" height="1" fill="#000"/><rect x="6" y="5" width="3" height="1" fill="#000"/><rect x="0" y="6" width="1" height="1" fill="#000"/><rect x="6" y="6" width="1" height="1" fill="#000"/><rect x="0" y="7" width="1" height="1" fill="#000"/><rect x="6" y="7" width="1" height="1" fill="#000"/><rect x="0" y="8" width="7" height="1" fill="#000"/></svg>
<div class="a craised" style="left:123px;top:727px;width:16px;height:15px"></div><svg class="a" style="left:125px;top:730px" width="9" height="9" shape-rendering="crispEdges"><rect x="0" y="0" width="9" height="1" fill="#000"/><rect x="0" y="1" width="9" height="1" fill="#000"/><rect x="0" y="2" width="1" height="1" fill="#000"/><rect x="8" y="2" width="1" height="1" fill="#000"/><rect x="0" y="3" width="1" height="1" fill="#000"/><rect x="8" y="3" width="1" height="1" fill="#000"/><rect x="0" y="4" width="1" height="1" fill="#000"/><rect x="8" y="4" width="1" height="1" fill="#000"/><rect x="0" y="5" width="1" height="1" fill="#000"/><rect x="8" y="5" width="1" height="1" fill="#000"/><rect x="0" y="6" width="1" height="1" fill="#000"/><rect x="8" y="6" width="1" height="1" fill="#000"/><rect x="0" y="7" width="1" height="1" fill="#000"/><rect x="8" y="7" width="1" height="1" fill="#000"/><rect x="0" y="8" width="9" height="1" fill="#000"/></svg>
<div class="a craised" style="left:141px;top:727px;width:16px;height:15px"></div><svg class="a" style="left:144px;top:730px" width="8" height="8" shape-rendering="crispEdges"><rect x="0" y="0" width="2" height="1" fill="#000"/><rect x="6" y="0" width="2" height="1" fill="#000"/><rect x="0" y="1" width="3" height="1" fill="#000"/><rect x="5" y="1" width="3" height="1" fill="#000"/><rect x="1" y="2" width="6" height="1" fill="#000"/><rect x="2" y="3" width="4" height="1" fill="#000"/><rect x="2" y="4" width="4" height="1" fill="#000"/><rect x="1" y="5" width="6" height="1" fill="#000"/><rect x="0" y="6" width="3" height="1" fill="#000"/><rect x="5" y="6" width="3" height="1" fill="#000"/><rect x="0" y="7" width="2" height="1" fill="#000"/><rect x="6" y="7" width="2" height="1" fill="#000"/></svg>
<div class="a raised" style="left:339px;top:217px;width:346px;height:112px;"></div>
<div class="a" style="left:342px;top:220px;width:340px;height:19px;background:linear-gradient(to right,#0a246a,#a6caf0)"></div>
<svg class="a" style="left:345px;top:223px" width="13" height="12" shape-rendering="crispEdges"><rect x="0" y="0" width="13" height="1" fill="#000080"/><rect x="0" y="1" width="13" height="1" fill="#000080"/><rect x="0" y="2" width="13" height="1" fill="#000"/><rect x="0" y="3" width="1" height="1" fill="#000"/><rect x="1" y="3" width="1" height="1" fill="#fff"/><rect x="2" y="3" width="3" height="1" fill="#000"/><rect x="5" y="3" width="1" height="1" fill="#fff"/><rect x="6" y="3" width="5" height="1" fill="#000"/><rect x="11" y="3" width="1" height="1" fill="#fff"/><rect x="12" y="3" width="1" height="1" fill="#000"/><rect x="0" y="4" width="1" height="1" fill="#000"/><rect x="1" y="4" width="5" height="1" fill="#fff"/><rect x="6" y="4" width="1" height="1" fill="#000"/><rect x="7" y="4" width="3" height="1" fill="#fff"/><rect x="10" y="4" width="1" height="1" fill="#000"/><rect x="11" y="4" width="1" height="1" fill="#fff"/><rect x="12" y="4" width="1" height="1" fill="#000"/><rect x="0" y="5" width="1" height="1" fill="#000"/><rect x="1" y="5" width="1" height="1" fill="#fff"/><rect x="2" y="5" width="1" height="1" fill="#c0c0c0"/><rect x="3" y="5" width="1" height="1" fill="#fff"/><rect x="4" y="5" width="1" height="1" fill="#c0c0c0"/><rect x="5" y="5" width="1" height="1" fill="#fff"/><rect x="6" y="5" width="5" height="1" fill="#000"/><rect x="11" y="5" width="1" height="1" fill="#fff"/><rect x="12" y="5" width="1" height="1" fill="#000"/><rect x="0" y="6" width="1" height="1" fill="#000"/><rect x="1" y="6" width="11" height="1" fill="#fff"/><rect x="12" y="6" width="1" height="1" fill="#000"/><rect x="0" y="7" width="1" height="1" fill="#000"/><rect x="1" y="7" width="1" height="1" fill="#fff"/><rect x="2" y="7" width="3" height="1" fill="#000"/><rect x="5" y="7" width="1" height="1" fill="#fff"/><rect x="6" y="7" width="5" height="1" fill="#000"/><rect x="11" y="7" width="1" height="1" fill="#fff"/><rect x="12" y="7" width="1" height="1" fill="#000"/><rect x="0" y="8" width="1" height="1" fill="#000"/><rect x="1" y="8" width="5" height="1" fill="#fff"/><rect x="6" y="8" width="1" height="1" fill="#000"/><rect x="7" y="8" width="3" height="1" fill="#fff"/><rect x="10" y="8" width="1" height="1" fill="#000"/><rect x="11" y="8" width="1" height="1" fill="#fff"/><rect x="12" y="8" width="1" height="1" fill="#000"/><rect x="0" y="9" width="1" height="1" fill="#000"/><rect x="1" y="9" width="1" height="1" fill="#fff"/><rect x="2" y="9" width="1" height="1" fill="#c0c0c0"/><rect x="3" y="9" width="1" height="1" fill="#fff"/><rect x="4" y="9" width="1" height="1" fill="#c0c0c0"/><rect x="5" y="9" width="1" height="1" fill="#fff"/><rect x="6" y="9" width="5" height="1" fill="#000"/><rect x="11" y="9" width="1" height="1" fill="#fff"/><rect x="12" y="9" width="1" height="1" fill="#000"/><rect x="0" y="10" width="1" height="1" fill="#000"/><rect x="1" y="10" width="11" height="1" fill="#fff"/><rect x="12" y="10" width="1" height="1" fill="#000"/><rect x="0" y="11" width="13" height="1" fill="#000"/></svg>
<div class="t" style="left:362px;top:224px;font-weight:bold;font-size:11.5px;letter-spacing:0.18px;color:#fff">Выберите период и подразделение</div>
<div class="a craised" style="left:664px;top:222px;width:16px;height:15px"></div><svg class="a" style="left:667px;top:225px" width="8" height="8" shape-rendering="crispEdges"><rect x="0" y="0" width="2" height="1" fill="#000"/><rect x="6" y="0" width="2" height="1" fill="#000"/><rect x="0" y="1" width="3" height="1" fill="#000"/><rect x="5" y="1" width="3" height="1" fill="#000"/><rect x="1" y="2" width="6" height="1" fill="#000"/><rect x="2" y="3" width="4" height="1" fill="#000"/><rect x="2" y="4" width="4" height="1" fill="#000"/><rect x="1" y="5" width="6" height="1" fill="#000"/><rect x="0" y="6" width="3" height="1" fill="#000"/><rect x="5" y="6" width="3" height="1" fill="#000"/><rect x="0" y="7" width="2" height="1" fill="#000"/><rect x="6" y="7" width="2" height="1" fill="#000"/></svg>
<div class="t d" style="left:407px;top:248px">Год</div>
<div class="a sunken" style="left:431px;top:246px;width:40px;height:18px;"></div>
<div class="t d" style="left:434px;top:248px">2002</div>
<div class="t d" style="left:483px;top:249px">Период</div>
<div class="a csunk" style="left:530px;top:247px;width:140px;height:18px;"></div>
<div class="a cbtn" style="left:652px;top:249px;width:16px;height:14px;"></div>
<svg class="a" style="left:657px;top:254px" width="5" height="3" shape-rendering="crispEdges"><rect x="0" y="0" width="5" height="1" fill="#000"/><rect x="1" y="1" width="3" height="1" fill="#000"/><rect x="2" y="2" width="1" height="1" fill="#000"/></svg>
<div class="t d" style="left:533px;top:249px">июль</div>
<div class="t d" style="left:347px;top:270px">Подразделение</div>
<div class="a csunk" style="left:431px;top:268px;width:239px;height:18px;"></div>
<div class="a cbtn" style="left:652px;top:270px;width:16px;height:14px;"></div>
<svg class="a" style="left:657px;top:275px" width="5" height="3" shape-rendering="crispEdges"><rect x="0" y="0" width="5" height="1" fill="#000"/><rect x="1" y="1" width="3" height="1" fill="#000"/><rect x="2" y="2" width="1" height="1" fill="#000"/></svg>
<div class="a" style="left:434px;top:270px;width:2px;height:13px;background:#000"></div>
<div class="a" style="left:431px;top:286px;width:239px;height:114px;background:#fff;border:1px solid #000"></div>
<div class="a" style="left:432px;top:287px;width:221px;height:112px;overflow:hidden">
<div class="t d" style="left:4px;top:0px">01. Аппарат Президента</div>
<div class="t d" style="left:4px;top:14px">02. Служба эксплуатации</div>
<div class="t d" style="left:4px;top:28px">03. Департамент информационных технологий</div>
<div class="t d" style="left:4px;top:42px">04. Служба развития бизнеса</div>
<div class="t d" style="left:4px;top:56px">05. Техническая служба</div>
<div class="t d" style="left:4px;top:70px">06. Коммерческая служба</div>
<div class="t d" style="left:4px;top:84px">07. Финансовая служба</div>
<div class="t d" style="left:4px;top:98px">07.01. Департамент экономики и финансов</div>
</div>
<svg class="a" style="left:653px;top:287px" width="16" height="112" shape-rendering="crispEdges"><defs><pattern id="ck" width="2" height="2" patternUnits="userSpaceOnUse"><rect width="2" height="2" fill="#fff"/><rect width="1" height="1" fill="#d4d0c8"/><rect x="1" y="1" width="1" height="1" fill="#d4d0c8"/></pattern></defs><rect x="0" y="0" width="16" height="112" fill="url(#ck)"/></svg>
<div class="a craised" style="left:653px;top:287px;width:16px;height:16px;"></div>
<svg class="a" style="left:657px;top:293px" width="7" height="4" shape-rendering="crispEdges"><rect x="3" y="0" width="1" height="1" fill="#000"/><rect x="2" y="1" width="3" height="1" fill="#000"/><rect x="1" y="2" width="5" height="1" fill="#000"/><rect x="0" y="3" width="7" height="1" fill="#000"/></svg>
<div class="a craised" style="left:653px;top:303px;width:16px;height:16px;"></div>
<div class="a craised" style="left:653px;top:383px;width:16px;height:16px;"></div>
<svg class="a" style="left:657px;top:389px" width="7" height="4" shape-rendering="crispEdges"><rect x="0" y="0" width="7" height="1" fill="#000"/><rect x="1" y="1" width="5" height="1" fill="#000"/><rect x="2" y="2" width="3" height="1" fill="#000"/><rect x="3" y="3" width="1" height="1" fill="#000"/></svg>
<div class="pan" style="left:9px;width:741px"></div>
<div class="pan" style="left:768px;width:31px"></div>
<div class="pan" style="left:802px;width:25px"></div>
<div class="pan" style="left:830px;width:25px"></div>
<div class="pan" style="left:858px;width:30px"></div>
<div class="pan" style="left:891px;width:32px"></div>
<div class="pan" style="left:926px;width:26px"></div>
<div class="pan" style="left:955px;width:28px"></div>
<div class="pan" style="left:987px;width:29px"></div>
<div class="a" style="left:0px;top:767px;width:1024px;height:1px;background:#fff"></div>
<div class="t" style="left:10px;top:753px;letter-spacing:-0.3px">Режим формы</div>
<div class="t" style="left:927px;top:753px;letter-spacing:-1px">NUM</div>
</body></html>
